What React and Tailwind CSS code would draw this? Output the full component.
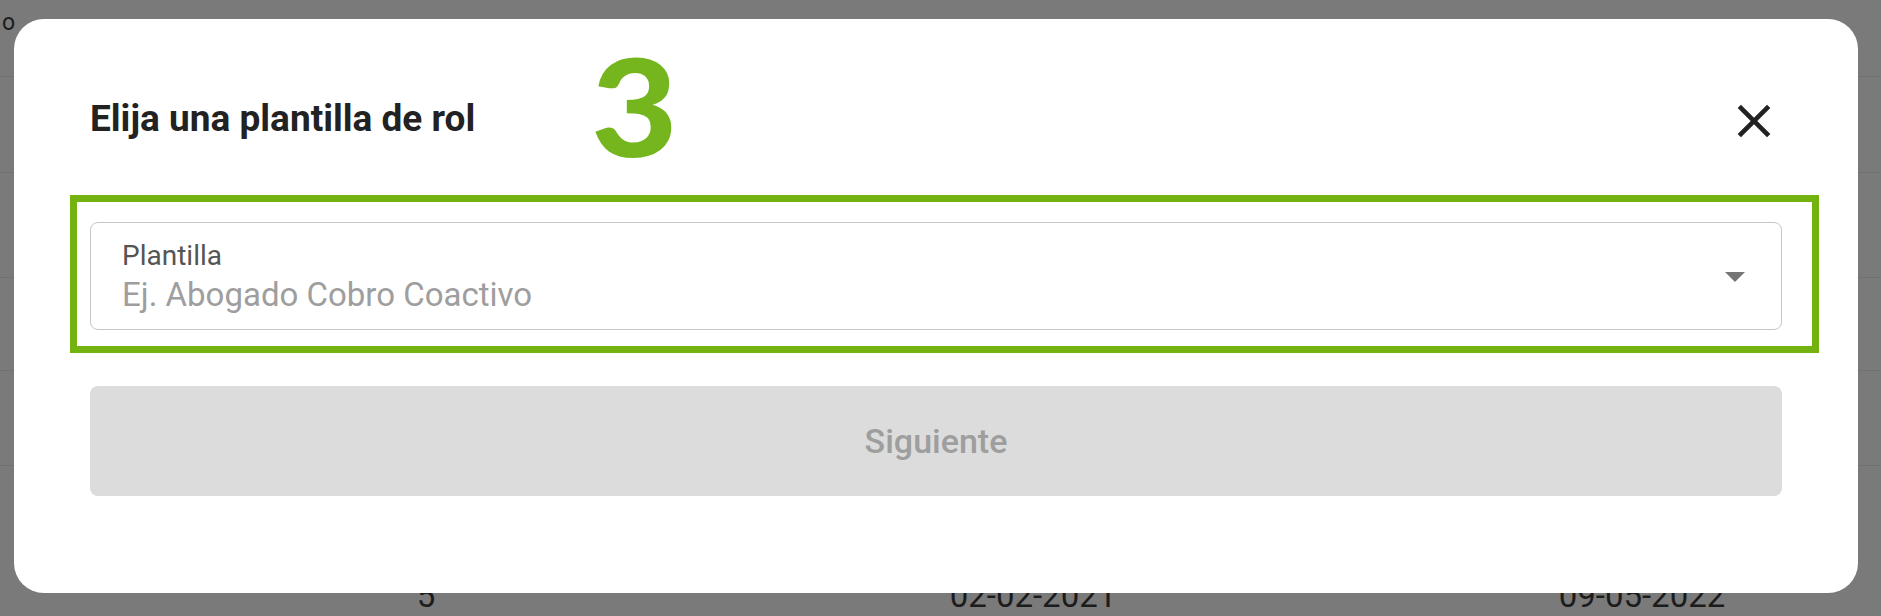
import React from 'react';

function CloseIcon({ className }) {
  return (
    <svg viewBox="0 0 24 24" className={className} fill="currentColor">
      <path d="M19 6.41L17.59 5 12 10.59 6.41 5 5 6.41 10.59 12 5 17.59 6.41 19 12 13.41 17.59 19 19 17.59 13.41 12z" />
    </svg>
  );
}

function ArrowDropDown({ className }) {
  return (
    <svg viewBox="0 0 24 24" className={className} fill="currentColor">
      <path d="M7 10l5 5 5-5z" />
    </svg>
  );
}

function BackgroundTable() {
  return (
    <div className="flex flex-col text-[#1c1c1c]">
      <div className="h-[77px] border-b border-[#707070] pl-[2px] pt-[8px] text-[23px] leading-[30px]">o</div>
      <div className="h-[96px] border-b border-[#707070]" />
      <div className="h-[105px] border-b border-[#707070]" />
      <div className="h-[93px] border-b border-[#707070]" />
      <div className="h-[95px] border-b border-[#707070]" />
      <div className="flex pt-[110px] text-[33px] leading-[40px]">
        <div className="w-[852px] shrink-0 text-center">5</div>
        <div className="w-[362px] shrink-0 text-center">02-02-2021</div>
        <div className="w-[856px] shrink-0 text-center">09-05-2022</div>
      </div>
    </div>
  );
}

export default function App() {
  return (
    <div className="relative h-[616px] w-full overflow-hidden bg-[#7a7a7a] font-['Roboto',sans-serif]">
      <BackgroundTable />

      <div className="absolute inset-0 pl-[14px] pt-[19px]">
        <div className="relative flex h-[574px] w-[1844px] flex-col rounded-[30px] bg-white px-[76px] pt-[78px]">
          <div className="flex items-start justify-between">
            <h2 className="mt-[1px] text-[37px] font-bold leading-[42px] text-[#222222]">Elija una plantilla de rol</h2>
            <button type="button" className="-mt-[4px] text-[#222222]">
              <CloseIcon className="h-[56px] w-[56px]" />
            </button>
          </div>

          <div className="relative mt-[73px]">
            <div className="flex h-[108px] items-center rounded-[8px] border border-[#c6c6c6] pl-[31px] pr-[22px]">
              <div className="flex flex-1 flex-col">
                <span className="text-[28px] leading-[34px] text-[#555555]">Plantilla</span>
                <span className="mt-[3px] text-[33px] leading-[38px] text-[#9e9e9e]">Ej. Abogado Cobro Coactivo</span>
              </div>
              <ArrowDropDown className="h-[48px] w-[48px] text-[#757575]" />
            </div>
            <div className="pointer-events-none absolute -bottom-[23px] -left-[20px] -right-[37px] -top-[27px] border-[7px] border-[#73b20f]" />
          </div>

          <button
            type="button"
            disabled
            className="mt-[56px] flex h-[110px] items-center justify-center rounded-[8px] bg-[#dcdcdc] text-[34px] font-medium text-[#9e9e9e]"
          >
            Siguiente
          </button>

          <span className="pointer-events-none absolute left-[577px] top-[18px] origin-left scale-x-[1.1] font-['Lato',sans-serif] text-[136px] font-black leading-none text-[#75b61f]">
            3
          </span>
        </div>
      </div>
    </div>
  );
}
